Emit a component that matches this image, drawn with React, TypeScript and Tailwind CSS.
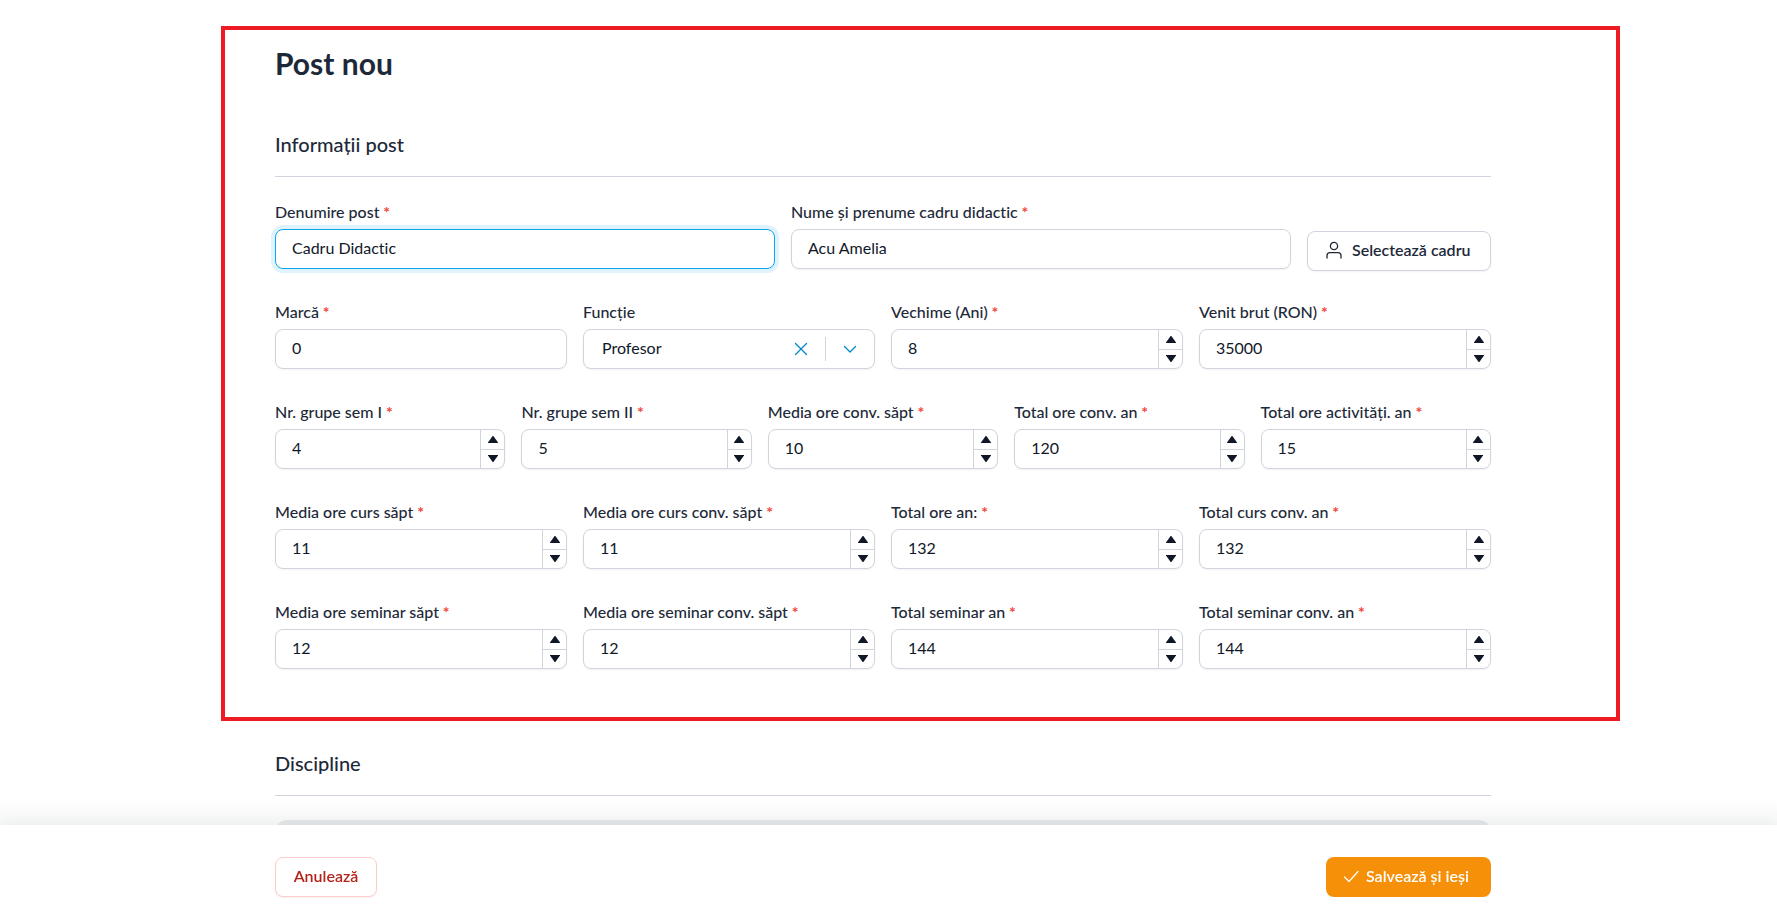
import { useState } from "react";

interface NumberFieldProps {
  id: string;
  label: string;
  initial: number;
}

const workloadRows: NumberFieldProps[][] = [
  [
    { id: "media-curs-sapt", label: "Media ore curs săpt", initial: 11 },
    { id: "media-curs-conv-sapt", label: "Media ore curs conv. săpt", initial: 11 },
    { id: "total-ore-an", label: "Total ore an:", initial: 132 },
    { id: "total-curs-conv-an", label: "Total curs conv. an", initial: 132 },
  ],
  [
    { id: "media-seminar-sapt", label: "Media ore seminar săpt", initial: 12 },
    { id: "media-seminar-conv-sapt", label: "Media ore seminar conv. săpt", initial: 12 },
    { id: "total-seminar-an", label: "Total seminar an", initial: 144 },
    { id: "total-seminar-conv-an", label: "Total seminar conv. an", initial: 144 },
  ],
];

const groupFields: NumberFieldProps[] = [
  { id: "grupe-sem-1", label: "Nr. grupe sem I", initial: 4 },
  { id: "grupe-sem-2", label: "Nr. grupe sem II", initial: 5 },
  { id: "media-conv-sapt", label: "Media ore conv. săpt", initial: 10 },
  { id: "total-conv-an", label: "Total ore conv. an", initial: 120 },
  { id: "total-activitati-an", label: "Total ore activități. an", initial: 15 },
];

function FieldLabel({
  htmlFor,
  text,
  required = true,
}: {
  htmlFor: string;
  text: string;
  required?: boolean;
}) {
  return (
    <label htmlFor={htmlFor} className="block font-medium whitespace-nowrap text-[#1d2939]">
      {text}
      {required && <span className="font-bold text-[#f04438]"> *</span>}
    </label>
  );
}

function TextField({
  id,
  label,
  initial,
  focused = false,
}: {
  id: string;
  label: string;
  initial: string;
  focused?: boolean;
}) {
  const [value, setValue] = useState(initial);

  return (
    <div className="min-w-0 flex-1">
      <FieldLabel htmlFor={id} text={label} />
      <input
        id={id}
        type="text"
        value={value}
        onChange={(e) => setValue(e.target.value)}
        className={
          focused
            ? "mt-[5px] block h-10 w-full rounded-lg border border-[#0ba5ec] bg-white px-4 pb-[3px] text-[#101828] ring-4 ring-[#e0f2fe] outline-none"
            : "mt-[5px] block h-10 w-full rounded-lg border border-[#d0d5dd] bg-white px-4 pb-[3px] text-[#101828] shadow-xs outline-none"
        }
      />
    </div>
  );
}

function NumberField({ id, label, initial }: NumberFieldProps) {
  const [value, setValue] = useState(initial);

  return (
    <div className="min-w-0">
      <FieldLabel htmlFor={id} text={label} />
      <div className="mt-[5px] flex h-10 overflow-hidden rounded-lg border border-[#d0d5dd] bg-white shadow-xs">
        <input
          id={id}
          type="text"
          inputMode="numeric"
          value={value}
          onChange={(e) => setValue(Number(e.target.value) || 0)}
          className="min-w-0 flex-1 px-4 pb-0.5 text-[#101828] outline-none"
        />
        <div className="flex w-6 shrink-0 flex-col border-l border-[#d0d5dd]">
          <button
            type="button"
            aria-label="Crește"
            onClick={() => setValue(value + 1)}
            className="flex flex-1 items-center justify-center border-b border-[#d0d5dd] text-[#101828]"
          >
            <svg viewBox="0 0 10 7" className="h-[7px] w-[10px]" fill="currentColor">
              <path d="M4.6 0h.8L10 6.4V7H0v-.6z" />
            </svg>
          </button>
          <button
            type="button"
            aria-label="Scade"
            onClick={() => setValue(value - 1)}
            className="flex flex-1 items-center justify-center text-[#101828]"
          >
            <svg viewBox="0 0 10 7" className="h-[7px] w-[10px]" fill="currentColor">
              <path d="M0 0h10v.6L5.4 7h-.8L0 .6z" />
            </svg>
          </button>
        </div>
      </div>
    </div>
  );
}

function FunctionSelect() {
  const [value, setValue] = useState("Profesor");

  return (
    <div className="min-w-0">
      <FieldLabel htmlFor="functie" text="Funcție" required={false} />
      <div className="relative mt-[5px] h-10 rounded-lg border border-[#d0d5dd] bg-white shadow-xs">
        <select
          id="functie"
          value={value}
          onChange={(e) => setValue(e.target.value)}
          className="h-full w-full appearance-none rounded-lg pr-24 pb-0.5 pl-[18px] text-[#101828] outline-none"
        >
          <option value=""></option>
          <option>Profesor</option>
          <option>Conferențiar</option>
          <option>Lector</option>
          <option>Asistent</option>
        </select>
        {/* Clear button and chevron sit over the select */}
        <div className="pointer-events-none absolute inset-y-0 right-0 flex items-center pr-[17px] text-[#0086c9]">
          <button
            type="button"
            aria-label="Golește"
            onClick={() => setValue("")}
            className="pointer-events-auto"
          >
            <svg viewBox="0 0 14 14" className="h-[14px] w-[14px]" fill="none" stroke="currentColor" strokeWidth="1.3" strokeLinecap="round">
              <path d="M1.5 1.5l11 11M12.5 1.5l-11 11" />
            </svg>
          </button>
          <span className="mx-[17px] h-6 w-px bg-[#d0d5dd]" />
          <svg viewBox="0 0 14 14" className="h-[14px] w-[14px]" fill="none" stroke="currentColor" strokeWidth="1.3" strokeLinecap="round" strokeLinejoin="round">
            <path d="M1.5 4.5L7 10l5.5-5.5" />
          </svg>
        </div>
      </div>
    </div>
  );
}

function SectionTitle({ title }: { title: string }) {
  return (
    <h2 className="border-b border-[#d0d5dd] pb-[18px] text-xl font-medium text-[#1d2939]">
      {title}
    </h2>
  );
}

export default function App() {
  return (
    <div className="h-screen overflow-hidden bg-white font-['Lato','Noto_Sans',sans-serif] text-base [font-variant-ligatures:none]">
      <div className="pr-[11px]">
        <main className="mx-auto max-w-7xl px-8 pt-[26px]">
          <section className="relative pt-[19px] pb-[52px]">
            <div className="pointer-events-none absolute inset-y-0 -right-[129px] -left-[54px] border-4 border-[#ed1c24]" />
            <h1 className="text-3xl font-bold text-[#1d2939]">Post nou</h1>

            <div className="mt-[49px]">
              <SectionTitle title="Informații post" />
            </div>

            <div className="mt-[23px] flex gap-4">
              <TextField id="denumire" label="Denumire post" initial="Cadru Didactic" focused />
              <TextField id="nume" label="Nume și prenume cadru didactic" initial="Acu Amelia" />
              <div className="flex items-end pt-[31px]">
                <button
                  type="button"
                  className="flex h-10 w-46 items-center gap-2 rounded-lg border border-[#d0d5dd] bg-white px-4 pb-0.5 font-semibold whitespace-nowrap text-[#1d2939] shadow-xs"
                >
                  <svg viewBox="0 0 20 20" className="h-5 w-5" fill="none" stroke="currentColor" strokeWidth="1.3" strokeLinecap="round" strokeLinejoin="round">
                    <circle cx="10" cy="6" r="3.6" />
                    <path d="M3 18v-2.3a3 3 0 0 1 3-3h8a3 3 0 0 1 3 3V18" />
                  </svg>
                  Selectează cadru
                </button>
              </div>
            </div>

            <div className="mt-[29px] flex flex-col gap-[31px]">
              <div className="grid grid-cols-4 gap-4">
                <TextField id="marca" label="Marcă" initial="0" />
                <FunctionSelect />
                <NumberField id="vechime" label="Vechime (Ani)" initial={8} />
                <NumberField id="venit" label="Venit brut (RON)" initial={35000} />
              </div>
              <div className="grid grid-cols-5 gap-4">
                {groupFields.map((field) => (
                  <NumberField key={field.id} {...field} />
                ))}
              </div>
              {workloadRows.map((row) => (
                <div key={row[0].id} className="grid grid-cols-4 gap-4">
                  {row.map((field) => (
                    <NumberField key={field.id} {...field} />
                  ))}
                </div>
              ))}
            </div>
          </section>

          <section className="pt-7">
            <SectionTitle title="Discipline" />
            <div className="mt-6 h-24 rounded-xl bg-[#eaecf0]" />
          </section>
        </main>
      </div>

      <footer className="fixed inset-x-0 bottom-0 bg-white pr-[11px] shadow-[0_0_20px_8px_rgba(16,32,24,0.08)]">
        <div className="mx-auto flex max-w-7xl justify-between px-8 pt-8 pb-4">
          <button
            type="button"
            className="h-10 w-[102px] rounded-lg border border-[#fecdca] bg-white pb-0.5 font-semibold text-[#b42318] shadow-xs"
          >
            Anulează
          </button>
          <button
            type="button"
            className="flex h-10 w-[165px] items-center gap-1.5 rounded-lg bg-[#f79009] px-4 pb-0.5 font-semibold whitespace-nowrap text-white"
          >
            <svg viewBox="0 0 18 18" className="h-[18px] w-[18px]" fill="none" stroke="currentColor" strokeWidth="1.2" strokeLinecap="round" strokeLinejoin="round">
              <path d="M2.5 10L7 14.5 16 4.5" />
            </svg>
            Salvează și ieși
          </button>
        </div>
      </footer>
    </div>
  );
}
